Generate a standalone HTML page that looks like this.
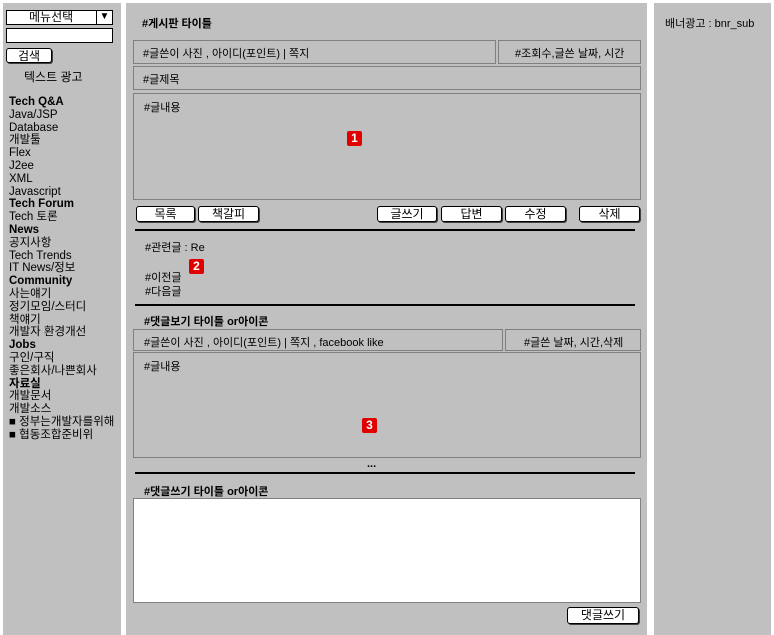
<!DOCTYPE html>
<html><head><meta charset="utf-8"><style>
*{margin:0;padding:0;box-sizing:border-box}
body{width:774px;height:635px;background:#fff;position:relative;overflow:hidden;font-family:"Liberation Sans","Noto Sans CJK KR","NanumGothic",sans-serif;font-size:11px;color:#000}
.p{position:absolute;background:#c0c0c0}
.a{position:absolute;white-space:nowrap}
.bx{position:absolute;border:1px solid #808080}
.btn{position:absolute;background:#fff;border:1px solid #000;border-radius:3px;text-align:center;font-size:12px;line-height:14px;box-shadow:1px 1px 0 #404040}
.hr{position:absolute;height:2px;background:#000;left:135px;width:500px}
.bd{position:absolute;width:15px;height:15px;background:#e00000;color:#fff;font-weight:bold;font-size:12px;text-align:center;line-height:15px;border-radius:2px}
.b{font-weight:bold}
.m{font-size:11.5px}
.m div{height:12.8px;line-height:12.8px}
</style></head><body>
<div class="p" style="left:3px;top:3px;width:118px;height:632px"></div>
<div class="p" style="left:126px;top:3px;width:521px;height:632px"></div>
<div class="p" style="left:654px;top:3px;width:117px;height:632px"></div>

<div class="a" style="left:6px;top:10px;width:107px;height:15px;background:#fff;border:1px solid #000;font-size:12px;line-height:13px;padding-left:22px">메뉴선택<span style="position:absolute;right:0;top:-1px;width:16px;height:15px;border-left:1px solid #000;text-align:center;font-size:10px">▼</span></div>
<div class="a" style="left:6px;top:28px;width:107px;height:15px;background:#fff;border:1px solid #000"></div>
<div class="btn" style="left:6px;top:48px;width:46px;height:15px">검색</div>
<div class="a" style="left:24px;top:68px;font-size:12px">텍스트 광고</div>
<div class="a m" style="left:9px;top:96px">
<div class="b">Tech Q&amp;A</div><div>Java/JSP</div><div>Database</div><div>개발툴</div><div>Flex</div><div>J2ee</div><div>XML</div><div>Javascript</div><div class="b">Tech Forum</div><div>Tech 토론</div><div class="b">News</div><div>공지사항</div><div>Tech Trends</div><div>IT News/정보</div><div class="b">Community</div><div>사는얘기</div><div>정기모임/스터디</div><div>책얘기</div><div>개발자 환경개선</div><div class="b">Jobs</div><div>구인/구직</div><div>좋은회사/나쁜회사</div><div class="b">자료실</div><div>개발문서</div><div>개발소스</div><div>■ 정부는개발자를위해</div><div>■ 협동조합준비위</div>
</div>

<div class="a b" style="left:142px;top:15px">#게시판 타이틀</div>
<div class="bx" style="left:133px;top:40px;width:363px;height:24px"></div>
<div class="a" style="left:143px;top:45px">#글쓴이 사진 , 아이디(포인트) | 쪽지</div>
<div class="bx" style="left:498px;top:40px;width:143px;height:24px"></div>
<div class="a" style="left:515px;top:45px">#조회수,글쓴 날짜, 시간</div>
<div class="bx" style="left:133px;top:66px;width:508px;height:24px"></div>
<div class="a" style="left:143px;top:71px">#글제목</div>
<div class="bx" style="left:133px;top:93px;width:508px;height:107px"></div>
<div class="a" style="left:144px;top:99px">#글내용</div>
<div class="bd" style="left:347px;top:131px">1</div>

<div class="btn" style="left:136px;top:206px;width:59px;height:16px">목록</div>
<div class="btn" style="left:198px;top:206px;width:61px;height:16px">책갈피</div>
<div class="btn" style="left:377px;top:206px;width:60px;height:16px">글쓰기</div>
<div class="btn" style="left:441px;top:206px;width:61px;height:16px">답변</div>
<div class="btn" style="left:505px;top:206px;width:61px;height:16px">수정</div>
<div class="btn" style="left:579px;top:206px;width:61px;height:16px">삭제</div>
<div class="hr" style="top:229px"></div>
<div class="a" style="left:145px;top:239px">#관련글 : Re</div>
<div class="bd" style="left:189px;top:259px">2</div>
<div class="a" style="left:145px;top:269px">#이전글</div>
<div class="a" style="left:145px;top:283px">#다음글</div>
<div class="hr" style="top:304px"></div>
<div class="a b" style="left:144px;top:313px">#댓글보기 타이틀 or아이콘</div>
<div class="bx" style="left:133px;top:329px;width:370px;height:22px"></div>
<div class="a" style="left:144px;top:334px">#글쓴이 사진 , 아이디(포인트) | 쪽지 , facebook like</div>
<div class="bx" style="left:505px;top:329px;width:136px;height:22px"></div>
<div class="a" style="left:524px;top:334px">#글쓴 날짜, 시간,삭제</div>
<div class="bx" style="left:133px;top:352px;width:508px;height:106px"></div>
<div class="a" style="left:144px;top:358px">#글내용</div>
<div class="bd" style="left:362px;top:418px">3</div>
<div class="a b" style="left:367px;top:458px">...</div>
<div class="hr" style="top:472px"></div>
<div class="a b" style="left:144px;top:483px">#댓글쓰기 타이틀 or아이콘</div>
<div class="a" style="left:133px;top:498px;width:508px;height:105px;background:#fff;border:1px solid #808080"></div>
<div class="btn" style="left:567px;top:607px;width:72px;height:17px;line-height:15px">댓글쓰기</div>

<div class="a" style="left:665px;top:15px">배너광고 : bnr_sub</div>
</body></html>
